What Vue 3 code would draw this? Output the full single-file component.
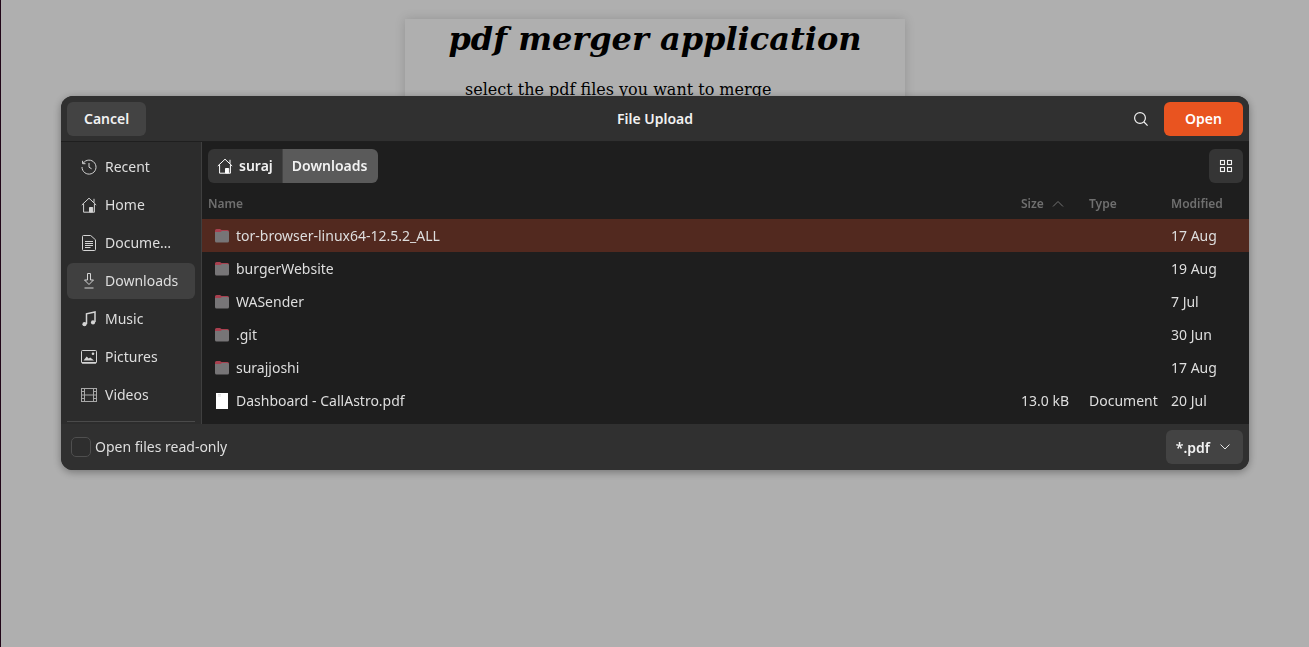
<script setup>
const places = [
  { name: "Recent", icon: "recent" },
  { name: "Home", icon: "home" },
  { name: "Docume…", icon: "doc" },
  { name: "Downloads", icon: "down", active: true },
  { name: "Music", icon: "music" },
  { name: "Pictures", icon: "pic" },
  { name: "Videos", icon: "video" },
];

const files = [
  { name: "tor-browser-linux64-12.5.2_ALL", modified: "17 Aug", folder: true, selected: true },
  { name: "burgerWebsite", modified: "19 Aug", folder: true },
  { name: "WASender", modified: "7 Jul", folder: true },
  { name: ".git", modified: "30 Jun", folder: true },
  { name: "surajjoshi", modified: "17 Aug", folder: true },
  { name: "Dashboard - CallAstro.pdf", size: "13.0 kB", type: "Document", modified: "20 Jul" },
];
</script>

<template>
  <div class="page">
    <div class="card">
      <h1>pdf merger application</h1>
      <p>select the pdf files you want to merge</p>
    </div>
  </div>

  <div class="overlay">
    <div class="dialog">
      <header class="head">
        <button class="btn">Cancel</button>
        <span class="title">File Upload</span>
        <div class="head-right">
          <svg class="search" width="16" height="16" viewBox="0 0 16 16" fill="none" stroke="#f2f2f2" stroke-width="1.2">
            <circle cx="7" cy="7" r="5.4" />
            <path d="M11 11l3.6 3.6" />
          </svg>
          <button class="btn open">Open</button>
        </div>
      </header>

      <div class="body">
        <aside class="side">
          <div class="places">
            <div v-for="p in places" :key="p.name" class="place" :class="{ active: p.active }">
              <svg width="16" height="16" viewBox="0 0 16 16" fill="none" stroke="#d4d4d4" stroke-width="1">
                <template v-if="p.icon === 'recent'">
                  <path d="M2.2 4.2A7 7 0 1 1 1 8" />
                  <path d="M1.6 1.8v2.9h2.9" />
                  <path d="M8 4v4.2l2.600 1.600" />
                </template>
                <template v-else-if="p.icon === 'home'">
                  <path d="M.8 8L8 1.200 15.200 8" />
                  <path d="M13 1.800v4" />
                  <path d="M2.600 7v8.200h10.800V7" />
                  <path d="M8.500 15V10.500h3.200V15z" fill="#d4d4d4" />
                </template>
                <template v-else-if="p.icon === 'doc'">
                  <path d="M1.500 1.500a1 1 0 0 1 1-1h7.200l4.800 4.300v9.700a1 1 0 0 1-1 1h-11a1 1 0 0 1-1-1z" />
                  <path d="M4 6.500h8M4 8.500h8M4 10.500h8M4 12.500h5.500" />
                </template>
                <template v-else-if="p.icon === 'down'">
                  <path d="M6.500 .5h3v6.500H12.500L8 11.500 3.500 7h3z" />
                  <path d="M3.500 15h9" />
                </template>
                <template v-else-if="p.icon === 'music'">
                  <path d="M5.500 13V2.800L14 1v10" stroke-width="1.500" />
                  <circle cx="3.500" cy="13.200" r="2.100" fill="#d4d4d4" stroke="none" />
                  <circle cx="12" cy="11.400" r="2.100" fill="#d4d4d4" stroke="none" />
                </template>
                <template v-else-if="p.icon === 'pic'">
                  <rect x=".5" y="1.500" width="15" height="12.500" rx="1" />
                  <path d="M1 13h14v1.500H1z" fill="#d4d4d4" stroke="none" />
                  <path d="M2.500 11.500l3.200-4 2 2 1.500-1 3.800 3z" fill="#d4d4d4" stroke="none" />
                  <circle cx="12" cy="4.800" r="1.300" fill="#d4d4d4" stroke="none" />
                </template>
                <template v-else>
                  <rect x=".5" y="1.500" width="15" height="13" stroke="#a8a8a8" />
                  <path d="M3.500 1.500v13M12.500 1.500v13M3.500 8h9M.5 4.500h3M.5 8h3M.5 11.500h3M12.500 4.500h3M12.500 8h3M12.500 11.500h3" stroke="#a8a8a8" />
                </template>
              </svg>
              <span>{{ p.name }}</span>
            </div>
          </div>
          <div class="side-sep"></div>
        </aside>

        <main class="main">
          <div class="toolbar">
            <div class="crumbs">
              <div class="crumb">
                <svg width="16" height="16" viewBox="0 0 16 16" fill="none" stroke="#fff" stroke-width="1">
                  <path d="M.8 8L8 1.200 15.200 8" />
                  <path d="M13 1.800v4" />
                  <path d="M2.600 7v8.200h10.800V7" />
                  <path d="M8.500 15V10.500h3.200V15z" fill="#fff" />
                </svg>
                <span>suraj</span>
              </div>
              <div class="crumb current"><span>Downloads</span></div>
            </div>
            <button class="grid-btn">
              <svg width="14" height="14" viewBox="0 0 14 14" fill="none" stroke="#f2f2f2" stroke-width="1.100">
                <rect x="1.500" y="1.500" width="4" height="4" />
                <rect x="8.500" y="1.500" width="4" height="4" />
                <rect x="1.500" y="8.500" width="4" height="4" />
                <rect x="8.500" y="8.500" width="4" height="4" />
              </svg>
            </button>
          </div>

          <div class="cols">
            <span class="c-name">Name</span>
            <span class="c-size">
              Size
              <svg width="12" height="8" viewBox="0 0 12 8" fill="none" stroke="#737373" stroke-width="1"><path d="M1 6.500l5-5 5 5" /></svg>
            </span>
            <span class="c-type">Type</span>
            <span class="c-mod">Modified</span>
          </div>

          <div v-for="f in files" :key="f.name" class="row" :class="{ selected: f.selected }">
            <span class="c-name">
              <svg v-if="f.folder" class="ficon" width="16" height="16" viewBox="0 0 16 16">
                <path d="M1 2.500A1.500 1.500 0 0 1 2.500 1h3.500l1.500 1h6A1.500 1.500 0 0 1 15 3.500V6H1z" fill="#a8404f" />
                <path d="M1 4h5.500l1.500-1h5.500A1.500 1.500 0 0 1 15 4.500v8.500a1.500 1.500 0 0 1-1.500 1.500h-11A1.500 1.500 0 0 1 1 13z" fill="#777577" />
              </svg>
              <svg v-else class="ficon" width="16" height="16" viewBox="0 0 16 16">
                <path d="M2 0h12v16H2z" fill="#fff" />
                <path d="M4 1.500h3M4 3h3" stroke="#d8d8d8" stroke-width=".8" />
              </svg>
              <span>{{ f.name }}</span>
            </span>
            <span class="c-size">{{ f.size }}</span>
            <span class="c-type">{{ f.type }}</span>
            <span class="c-mod">{{ f.modified }}</span>
          </div>
        </main>
      </div>

      <footer class="foot">
        <label class="check"><i></i><span>Open files read-only</span></label>
        <button class="btn filter">
          *.pdf
          <svg width="12" height="8" viewBox="0 0 12 8" fill="none" stroke="#e6e6e6" stroke-width="1"><path d="M1.500 1.500L6 6l4.500-4.500" /></svg>
        </button>
      </footer>
    </div>
  </div>
</template>

<style>
html,
body {
  margin: 0;
  background: #fff;
  overflow: hidden;
}
</style>

<style scoped>
.page {
  height: 647px;
  padding-top: 19px;
  box-sizing: border-box;
  border-left: 1px solid #300a24;
}

.card {
  width: 500px;
  height: 300px;
  margin-left: 404px;
  box-sizing: border-box;
  box-shadow: 0 0 10px rgba(0, 0, 0, 0.16);
  font-family: "DejaVu Serif", serif;
  color: #000;
}

.card h1 {
  margin: 0;
  padding-top: 1px;
  font-size: 32px;
  line-height: 38px;
  font-style: italic;
  text-align: center;
}

.card p {
  margin: 22px 0 0 60px;
  font-size: 16px;
  line-height: 19px;
}

.overlay {
  position: fixed;
  inset: 0;
  background: rgba(0, 0, 0, 0.314);
  padding: 96px 60px 0 61px;
  box-sizing: border-box;
}

.dialog {
  height: 374px;
  border-radius: 12px;
  overflow: hidden;
  background: #2c2c2c;
  box-shadow: 0 2px 8px rgba(0, 0, 0, 0.35);
  font-family: "Noto Sans", sans-serif;
  font-size: 14px;
  color: #dedede;
}

.head {
  position: relative;
  height: 46px;
  box-sizing: border-box;
  display: flex;
  align-items: center;
  justify-content: space-between;
  padding: 0 6px;
  background: #303030;
  border-bottom: 1px solid #1f1f1f;
}

.btn {
  height: 34px;
  padding: 0 17px;
  border: none;
  border-radius: 6px;
  background: #434343;
  color: #f2f2f2;
  font: 600 14px "Noto Sans", sans-serif;
}

.title {
  position: absolute;
  left: 0;
  right: 0;
  text-align: center;
  font-weight: 600;
  color: #f2f2f2;
  pointer-events: none;
}

.head-right {
  display: flex;
  align-items: center;
  gap: 15px;
}

.open {
  width: 79px;
  padding: 0;
  background: #e95420;
  color: #fff;
}

.body {
  display: flex;
  height: 282px;
}

.side {
  width: 141px;
  flex: none;
  box-sizing: border-box;
  padding: 7px 6px 0;
  background: #2c2c2c;
  border-right: 1px solid #3f3f3f;
  display: flex;
  flex-direction: column;
}

.places {
  flex: 1;
}

.place {
  height: 36px;
  margin-bottom: 2px;
  border-radius: 6px;
  display: flex;
  align-items: center;
  gap: 8px;
  padding-left: 14px;
}

.place span,
.crumb span,
.check span {
  margin-top: -2px;
}

.place.active {
  background: #404040;
}

.side-sep {
  height: 1px;
  margin-bottom: 2px;
  background: #4a4a4a;
}

.main {
  flex: 1;
  min-width: 0;
  background: #1e1e1e;
}

.toolbar {
  display: flex;
  justify-content: space-between;
  align-items: center;
  padding: 7px 6px 0;
}

.crumbs {
  display: flex;
  height: 34px;
  border-radius: 6px;
  overflow: hidden;
  font-weight: 600;
  color: #f2f2f2;
}

.crumb {
  display: flex;
  align-items: center;
  gap: 6px;
  padding: 0 9px;
  background: #353535;
}

.crumb.current {
  background: #5a5a5a;
  border-left: 1px solid #444;
  padding: 0 11px 0 9px;
}

.grid-btn {
  width: 34px;
  height: 34px;
  padding: 0;
  border: none;
  border-radius: 6px;
  background: #353535;
  display: flex;
  align-items: center;
  justify-content: center;
}

.cols,
.row {
  display: grid;
  grid-template-columns: 813px 68px 82px 1fr;
  align-items: center;
  padding-left: 6px;
}

.cols {
  height: 36px;
  padding-top: 4px;
  box-sizing: border-box;
  font-size: 12px;
  font-weight: 600;
  color: #6f6f6f;
}

.c-size svg {
  margin-left: 5px;
}

.row {
  height: 33px;
  color: #dedede;
}

.row.selected {
  background: #52291f;
}

.row .c-name {
  display: flex;
  align-items: center;
  gap: 6px;
  padding-left: 6px;
}

.ficon {
  flex: none;
}

.foot {
  height: 46px;
  display: flex;
  align-items: center;
  justify-content: space-between;
  padding: 0 6px 0 10px;
  background: #303030;
}

.check {
  display: flex;
  align-items: center;
  gap: 4px;
}

.check i {
  width: 18px;
  height: 18px;
  border: 1px solid #4f4f4f;
  border-radius: 5px;
  background: #2e2e2e;
}

.filter {
  display: flex;
  align-items: center;
  gap: 9px;
  padding: 0 12px 0 10px;
}
</style>
